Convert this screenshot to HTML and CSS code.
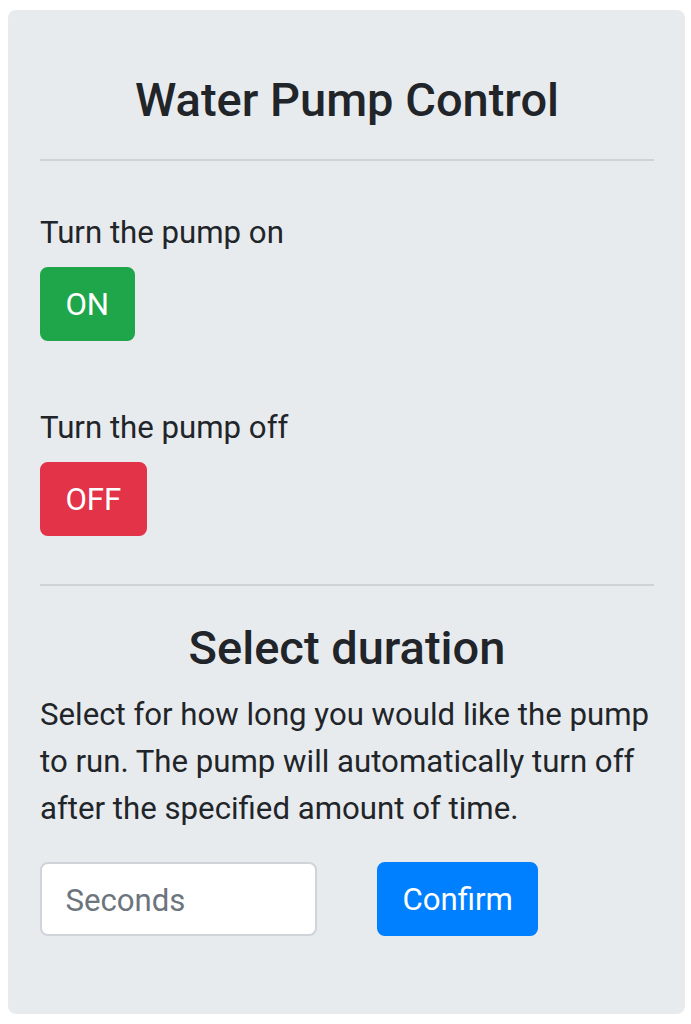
FILE: index.html
```html
<!DOCTYPE html>
<html lang="en">
<head>
<meta charset="utf-8">
<title>Water Pump Control</title>
<link rel="stylesheet" href="styles.css">
</head>
<body>
<main class="card">
  <h1 class="title">Water Pump Control</h1>
  <hr class="divider">
  <section class="controls">
    <div class="control">
      <p class="label">Turn the pump on</p>
      <button class="btn btn-on" type="button">ON</button>
    </div>
    <div class="control">
      <p class="label">Turn the pump off</p>
      <button class="btn btn-off" type="button">OFF</button>
    </div>
  </section>
  <hr class="divider">
  <h2 class="subtitle">Select duration</h2>
  <p class="desc">Select for how long you would like the pump to run. The pump will automatically turn off after the specified amount of time.</p>
  <form class="duration-row">
    <input class="seconds" type="number" placeholder="Seconds">
    <button class="btn btn-confirm" type="button">Confirm</button>
  </form>
</main>
</body>
</html>
```

FILE: styles.css
```css
html, body {
  margin: 0;
  padding: 0;
  background: #ffffff;
}

body {
  font-family: Roboto, "Liberation Sans", Arial, sans-serif;
  color: #212529;
  font-size: 31.2px;
  line-height: 1.5;
}

.card {
  box-sizing: border-box;
  width: 677px;
  margin: 10px 0 9px 8px;
  padding: 62px 31px 78px 32px;
  background: #e8ebee;
  border-radius: 8px;
}

.title,
.subtitle {
  margin: 0;
  font-size: 47px;
  font-weight: 500;
  line-height: 1.2;
  text-align: center;
}

.subtitle {
  padding-top: 3px;
}

.divider {
  margin: 31px 0;
  height: 0;
  border: 0;
  border-top: 2px solid rgba(0, 0, 0, 0.1);
}

.controls {
  display: flex;
  flex-direction: column;
  gap: 62px;
  padding: 15.6px 0 17px;
}

.control {
  display: flex;
  flex-direction: column;
  align-items: flex-start;
}

.label {
  margin: 0 0 8px;
  line-height: 50.8px;
}

.btn {
  box-sizing: border-box;
  height: 74.2px;
  padding: 13.7px 23.4px 9.7px;
  border: 2px solid transparent;
  border-radius: 7.8px;
  font-family: inherit;
  font-size: 31.2px;
  font-weight: 400;
  line-height: 1.5;
  color: #ffffff;
  cursor: pointer;
}

.btn-on {
  background: #1fa64b;
  border-color: #1fa64b;
}

.btn-off {
  background: #e23349;
  border-color: #e23349;
}

.btn-confirm {
  background: #0080ff;
  border-color: #0080ff;
}

.desc {
  margin: 16px 0 29px;
}

.duration-row {
  display: flex;
  align-items: center;
  gap: 60px;
  margin: 0;
}

.seconds {
  box-sizing: border-box;
  width: 277px;
  height: 74.2px;
  padding: 13.7px 23.4px 9.7px;
  border: 2px solid #ced4da;
  border-radius: 7.8px;
  background: #ffffff;
  font-family: inherit;
  font-size: 31.2px;
  line-height: 1.5;
  color: #495057;
}

.seconds::placeholder {
  color: #6c757d;
  opacity: 1;
}

.seconds::-webkit-outer-spin-button,
.seconds::-webkit-inner-spin-button {
  -webkit-appearance: none;
  margin: 0;
}
```
